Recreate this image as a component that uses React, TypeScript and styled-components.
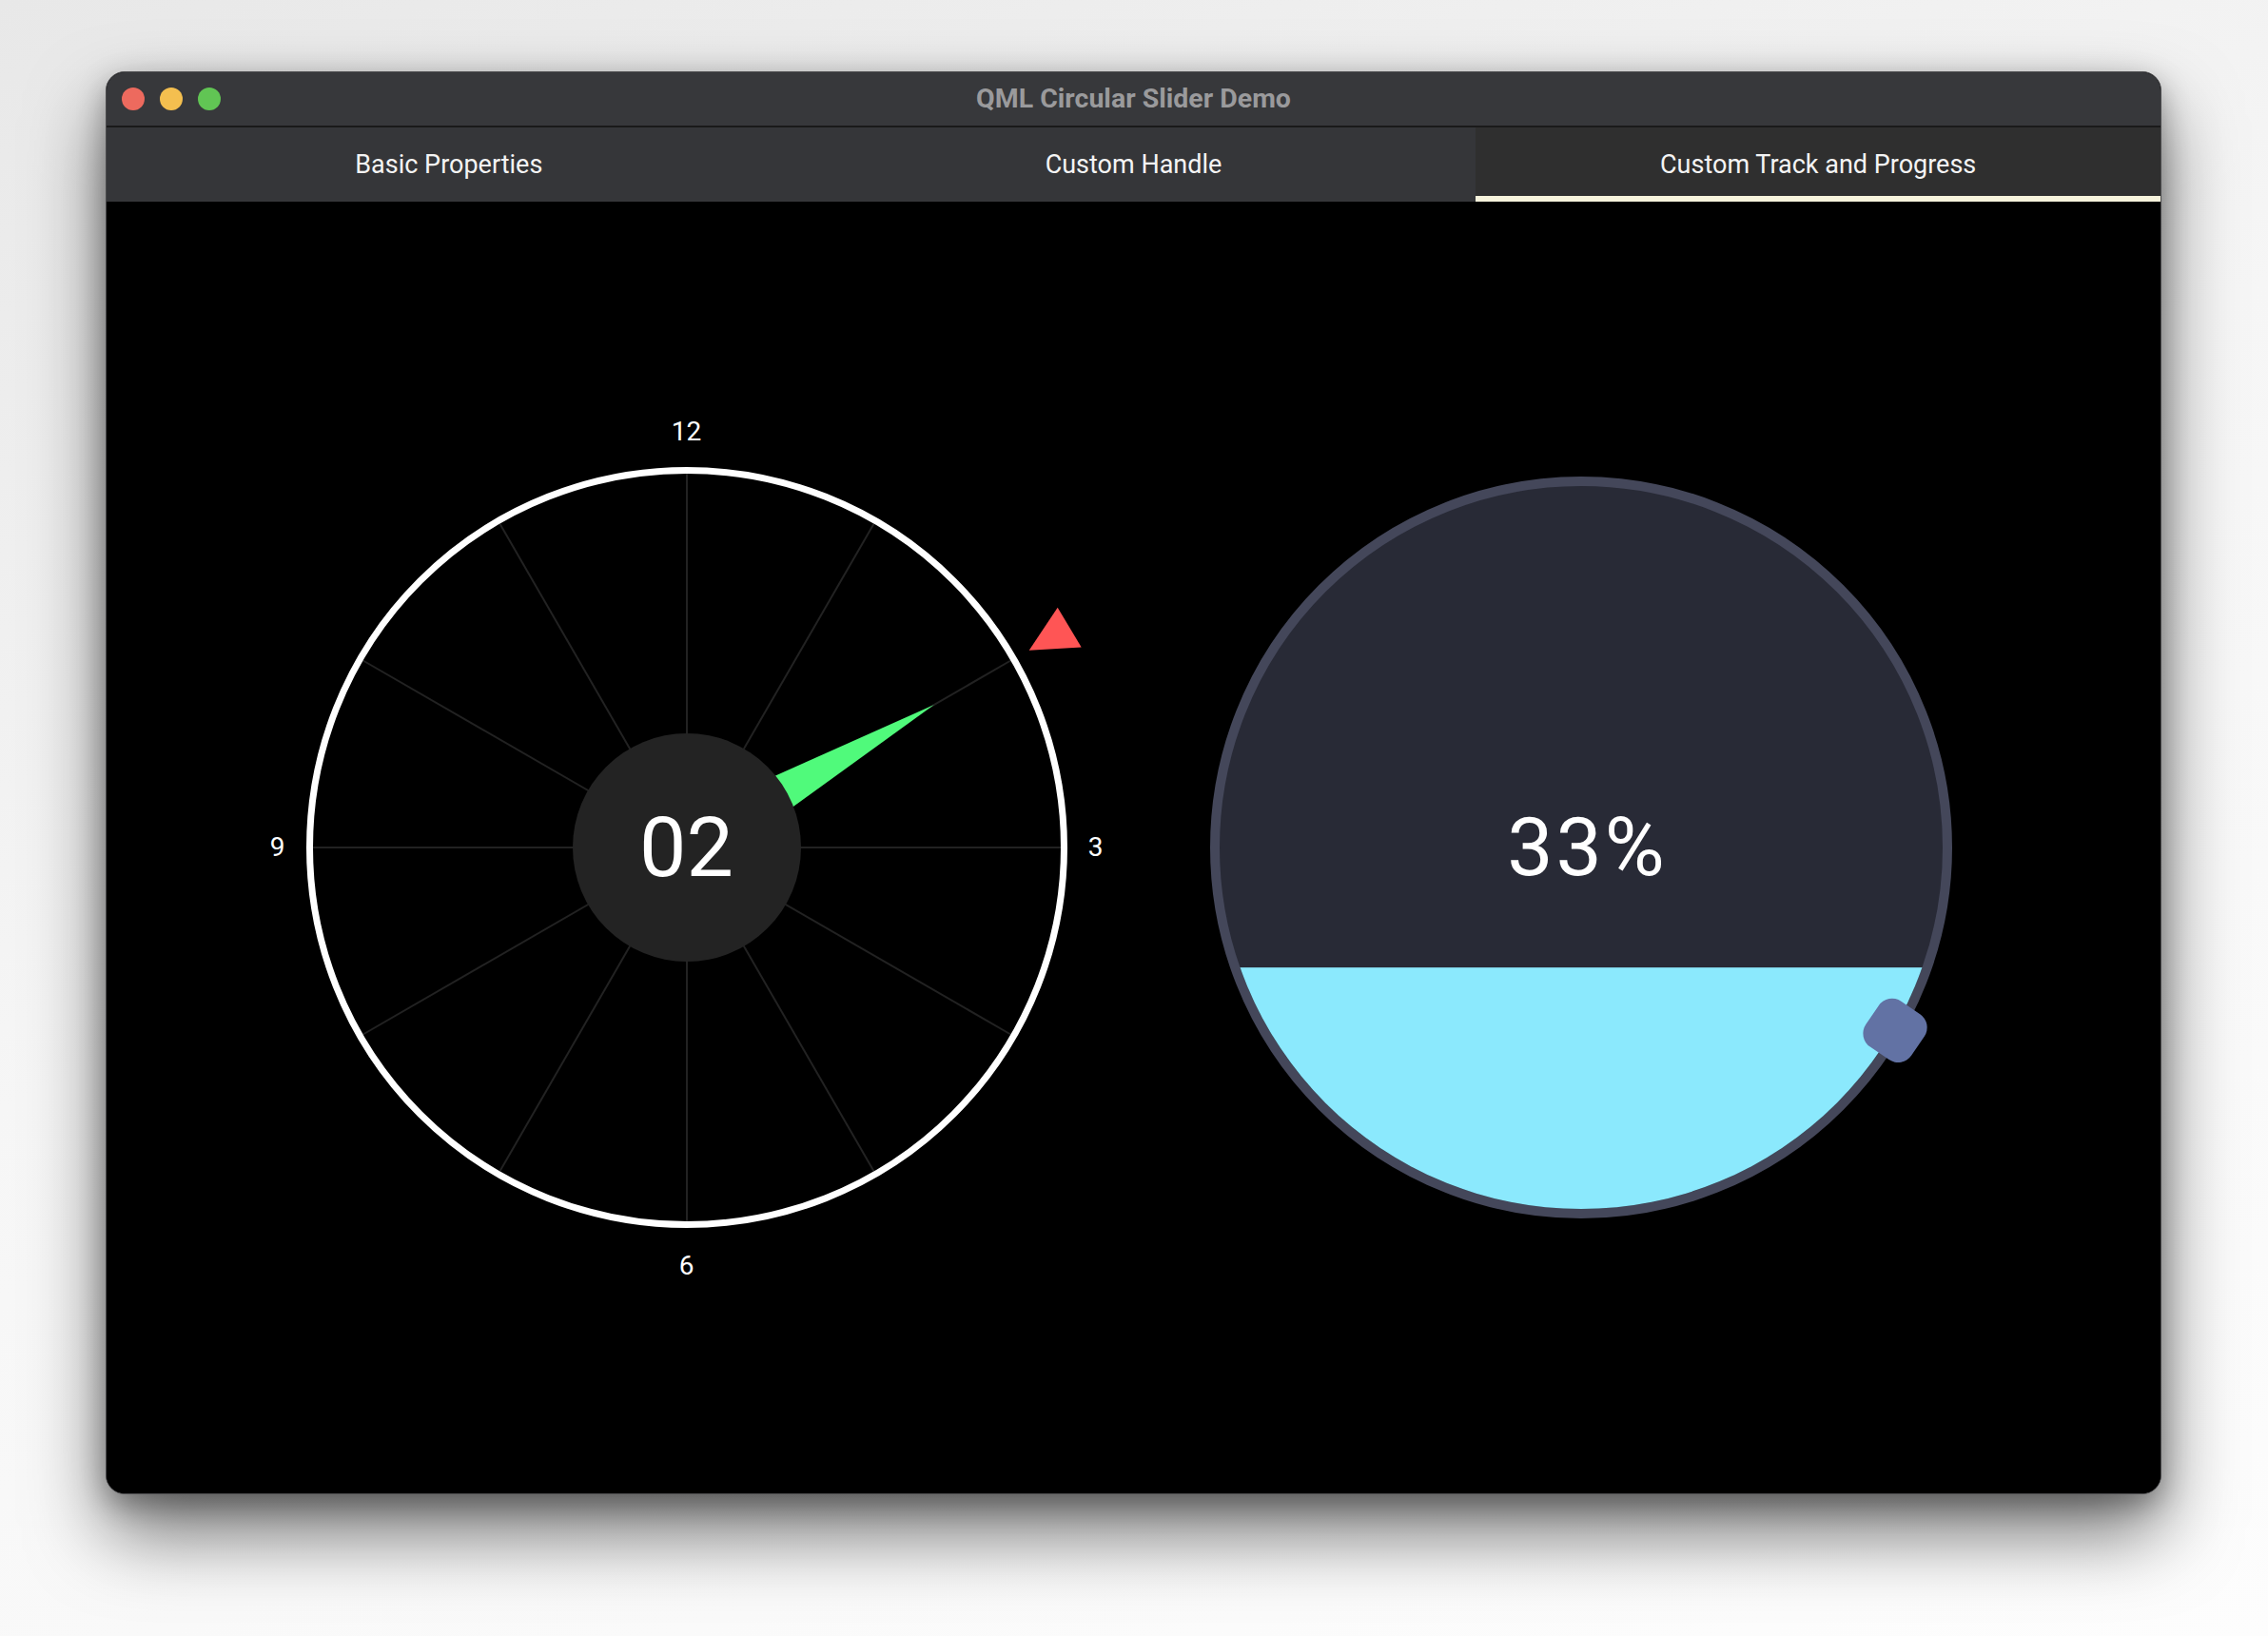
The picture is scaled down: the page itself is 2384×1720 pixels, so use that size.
import React from 'react';
import styled, { createGlobalStyle } from 'styled-components';

const GlobalStyle = createGlobalStyle`
  html, body {
    margin: 0;
    padding: 0;
    background: linear-gradient(160deg, #e8e8e8 0%, #f6f6f6 45%, #fdfdfd 100%);
    font-family: Roboto, "Liberation Sans", sans-serif;
  }
`;

const TABS = ['Basic Properties', 'Custom Handle', 'Custom Track and Progress'];
const SELECTED_TAB = 2;

const DIAL = 900;
const C = DIAL / 2;

// angle in degrees, clockwise from 12 o'clock
const polar = (deg: number, r: number) => {
  const a = (deg * Math.PI) / 180;
  return { x: C + r * Math.sin(a), y: C - r * Math.cos(a) };
};

const App: React.FC = () => {
  return (
    <>
      <GlobalStyle />
      <Page>
        <Window>
          <TitleBar>
            <Lights>
              <Light color="#ed6a5e" />
              <Light color="#f4bf4f" />
              <Light color="#61c554" />
            </Lights>
            <Title>QML Circular Slider Demo</Title>
            <span />
          </TitleBar>
          <TabBar>
            {TABS.map((t, i) => (
              <Tab key={t} active={i === SELECTED_TAB}>
                {t}
              </Tab>
            ))}
          </TabBar>
          <Content>
            <ClockDial hour={2} />
            <TankDial value={0.334} />
          </Content>
        </Window>
      </Page>
    </>
  );
};

export default App;

const ClockDial: React.FC<{ hour: number }> = ({ hour }) => {
  const angle = hour * 30;
  const tip = polar(angle, 300);
  const b1 = polar(angle + 90, 31);
  const b2 = polar(angle - 90, 31);
  const labels = [
    { text: '12', deg: 0, r: 437 },
    { text: '3', deg: 90, r: 430 },
    { text: '6', deg: 180, r: 440 },
    { text: '9', deg: 270, r: 430 },
  ];

  return (
    <DialBox>
      <svg width={DIAL} height={DIAL} viewBox={`0 0 ${DIAL} ${DIAL}`}>
        {Array.from({ length: 12 }).map((_, i) => {
          const p = polar(i * 30, 393);
          return <line key={i} x1={C} y1={C} x2={p.x} y2={p.y} stroke="#222222" strokeWidth={2} />;
        })}
        <circle cx={C} cy={C} r={396.5} fill="none" stroke="#ffffff" strokeWidth={7} />
        <polygon points={`${b1.x},${b1.y} ${tip.x},${tip.y} ${b2.x},${b2.y}`} fill="#50fa7b" />
        <circle cx={C} cy={C} r={120} fill="#232323" />
        <polygon points="839.7,197.8 809.7,242.8 864.7,239.5" fill="#ff5555" />
      </svg>
      {labels.map((l) => {
        const p = polar(l.deg, l.r);
        return (
          <HourLabel key={l.text} style={{ left: p.x, top: p.y }}>
            {l.text}
          </HourLabel>
        );
      })}
      <CenterValue size={88}>{String(hour).padStart(2, '0')}</CenterValue>
    </DialBox>
  );
};

const TankDial: React.FC<{ value: number }> = ({ value }) => {
  const inner = 380;
  const level = C + inner - 2 * inner * value;
  const handleAngle = value * 360;
  const h = polar(handleAngle, 382);

  return (
    <DialBox>
      <svg width={DIAL} height={DIAL} viewBox={`0 0 ${DIAL} ${DIAL}`}>
        <defs>
          <clipPath id="tank">
            <circle cx={C} cy={C} r={inner} />
          </clipPath>
        </defs>
        <circle cx={C} cy={C} r={385} fill="#282a36" stroke="#44475a" strokeWidth={10} />
        <rect x={0} y={level} width={DIAL} height={DIAL - level} fill="#8be9fd" clipPath="url(#tank)" />
        <rect
          x={h.x - 29}
          y={h.y - 29}
          width={58}
          height={58}
          rx={17}
          fill="#6272a4"
          transform={`rotate(${handleAngle + 4} ${h.x} ${h.y})`}
        />
      </svg>
      <CenterValue size={86} spacing={3} shift={14}>
        {Math.round(value * 100)}%
      </CenterValue>
    </DialBox>
  );
};

const Page = styled.div`
  width: 2384px;
  height: 1720px;
  box-sizing: border-box;
  padding: 75px 0 0 111px;
`;

const Window = styled.div`
  width: 2161px;
  height: 1496px;
  box-sizing: border-box;
  display: flex;
  flex-direction: column;
  border: 1px solid #4c4c4e;
  border-radius: 20px;
  overflow: hidden;
  background: #000000;
  box-shadow: 0 40px 80px rgba(0, 0, 0, 0.55), 0 10px 30px rgba(0, 0, 0, 0.3);
`;

const TitleBar = styled.div`
  height: 56px;
  flex: none;
  display: grid;
  grid-template-columns: 1fr auto 1fr;
  align-items: center;
  background: #37383b;
  border-bottom: 2px solid #1a1a1a;
`;

const Lights = styled.div`
  display: flex;
  gap: 16px;
  padding-left: 16px;
`;

const Light = styled.span<{ color: string }>`
  width: 24px;
  height: 24px;
  border-radius: 50%;
  background: ${(p) => p.color};
`;

const Title = styled.div`
  font-size: 28.5px;
  font-weight: 700;
  color: #9a9a9c;
  margin-top: -2px;
`;

const TabBar = styled.div`
  height: 78px;
  flex: none;
  display: flex;
  background: #353639;
`;

const Tab = styled.div<{ active: boolean }>`
  flex: 1;
  display: flex;
  align-items: center;
  justify-content: center;
  font-size: 27px;
  color: #f4f4f4;
  background: ${(p) => (p.active ? '#2f2f2f' : 'transparent')};
  box-shadow: ${(p) => (p.active ? 'inset 0 -6px 0 #f6f3dc' : 'none')};
`;

const Content = styled.div`
  flex: 1;
  display: flex;
  align-items: center;
  justify-content: center;
  gap: 40px;
  background: #000000;
`;

const DialBox = styled.div`
  position: relative;
  width: ${DIAL}px;
  height: ${DIAL}px;
  flex: none;

  svg {
    display: block;
  }
`;

const HourLabel = styled.span`
  position: absolute;
  transform: translate(-50%, -50%);
  font-size: 28px;
  line-height: 1;
  color: #ffffff;
`;

const CenterValue = styled.div<{ size: number; spacing?: number; shift?: number }>`
  position: absolute;
  inset: 0;
  display: flex;
  align-items: center;
  justify-content: center;
  padding-left: ${(p) => p.shift ?? 0}px;
  font-size: ${(p) => p.size}px;
  letter-spacing: ${(p) => p.spacing ?? 0}px;
  line-height: 1;
  color: #ffffff;
`;
